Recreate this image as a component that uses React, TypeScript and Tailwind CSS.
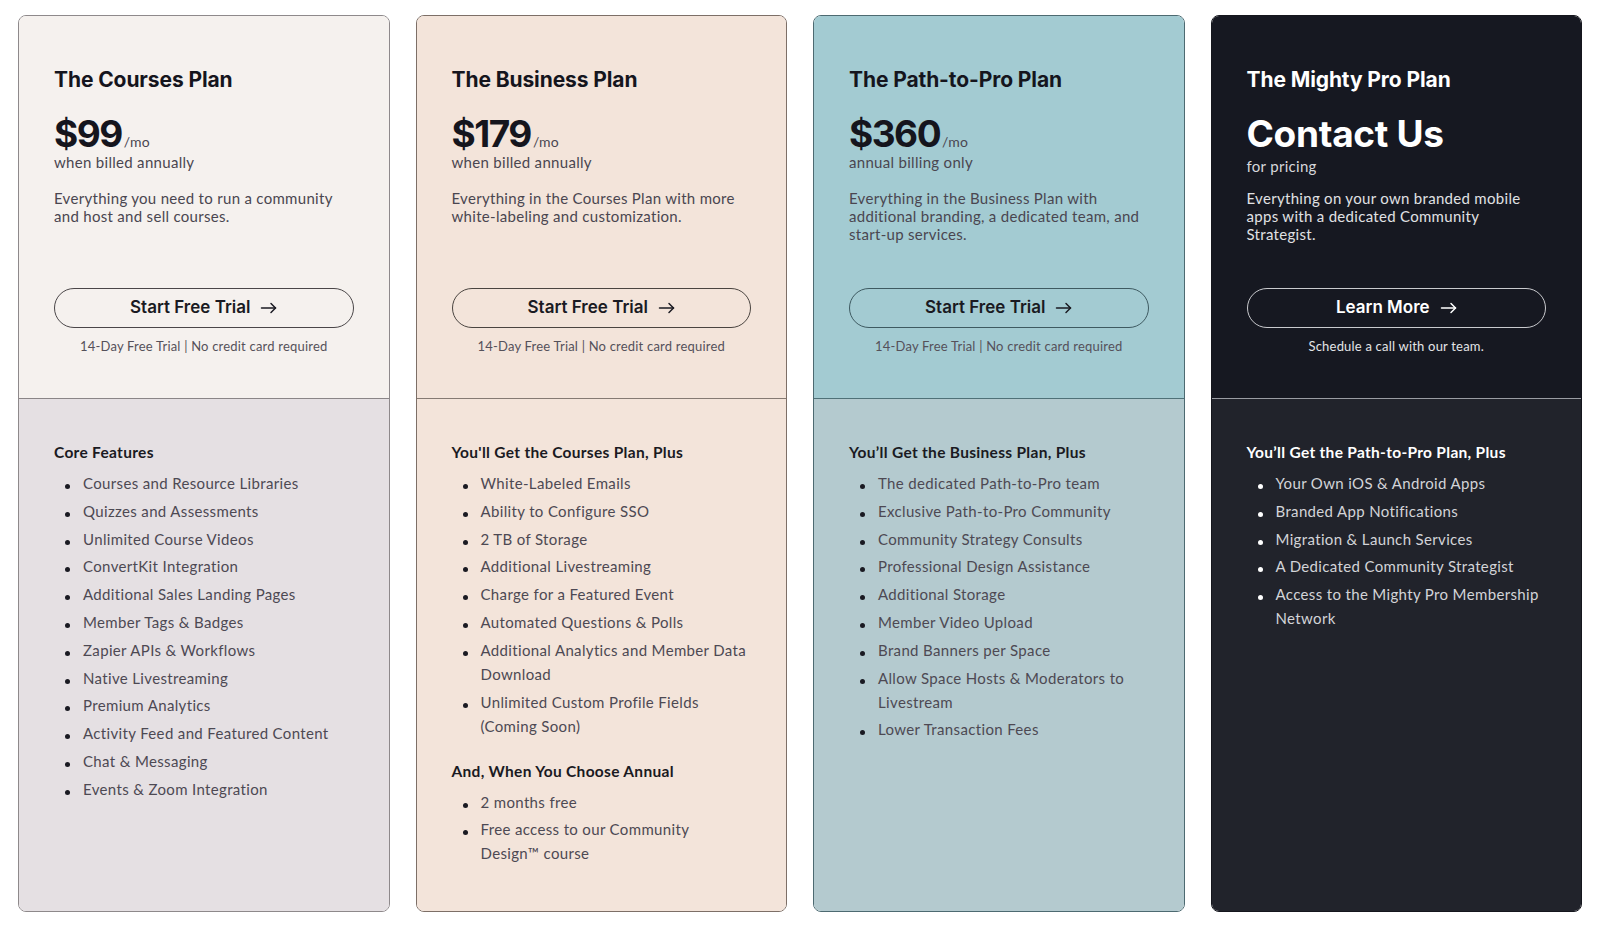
import React from 'react';

type Section = { heading: string; items: string[] };

type Plan = {
  name: string;
  price: string;
  perMonth: boolean;
  billing: string;
  description: string;
  cta: string;
  note: string;
  sections: Section[];
  dark?: boolean;
  cardClass: string;
  topClass: string;
  bottomClass: string;
  buttonClass: string;
};

const plans: Plan[] = [
  {
    name: 'The Courses Plan',
    price: '$99',
    perMonth: true,
    billing: 'when billed annually',
    description: 'Everything you need to run a community and host and sell courses.',
    cta: 'Start Free Trial',
    note: '14-Day Free Trial | No credit card required',
    sections: [
      {
        heading: 'Core Features',
        items: [
          'Courses and Resource Libraries',
          'Quizzes and Assessments',
          'Unlimited Course Videos',
          'ConvertKit Integration',
          'Additional Sales Landing Pages',
          'Member Tags & Badges',
          'Zapier APIs & Workflows',
          'Native Livestreaming',
          'Premium Analytics',
          'Activity Feed and Featured Content',
          'Chat & Messaging',
          'Events & Zoom Integration',
        ],
      },
    ],
    cardClass: 'border-[#8e898b]',
    topClass: 'bg-[#f5f1ee]',
    bottomClass: 'bg-[#e5e0e3] border-[#8a8587]',
    buttonClass: 'border-[#4a4648] text-[#1a1a22]',
  },
  {
    name: 'The Business Plan',
    price: '$179',
    perMonth: true,
    billing: 'when billed annually',
    description: 'Everything in the Courses Plan with more white-labeling and customization.',
    cta: 'Start Free Trial',
    note: '14-Day Free Trial | No credit card required',
    sections: [
      {
        heading: "You'll Get the Courses Plan, Plus",
        items: [
          'White-Labeled Emails',
          'Ability to Configure SSO',
          '2 TB of Storage',
          'Additional Livestreaming',
          'Charge for a Featured Event',
          'Automated Questions & Polls',
          'Additional Analytics and Member Data Download',
          'Unlimited Custom Profile Fields (Coming Soon)',
        ],
      },
      {
        heading: 'And, When You Choose Annual',
        items: ['2 months free', 'Free access to our Community Design™ course'],
      },
    ],
    cardClass: 'border-[#7d6f67]',
    topClass: 'bg-[#f3e4da]',
    bottomClass: 'bg-[#f3e4da] border-[#857a73]',
    buttonClass: 'border-[#4a4440] text-[#1a1a22]',
  },
  {
    name: 'The Path-to-Pro Plan',
    price: '$360',
    perMonth: true,
    billing: 'annual billing only',
    description:
      'Everything in the Business Plan with additional branding, a dedicated team, and start-up services.',
    cta: 'Start Free Trial',
    note: '14-Day Free Trial | No credit card required',
    sections: [
      {
        heading: 'You’ll Get the Business Plan, Plus',
        items: [
          'The dedicated Path-to-Pro team',
          'Exclusive Path-to-Pro Community',
          'Community Strategy Consults',
          'Professional Design Assistance',
          'Additional Storage',
          'Member Video Upload',
          'Brand Banners per Space',
          'Allow Space Hosts & Moderators to Livestream',
          'Lower Transaction Fees',
        ],
      },
    ],
    cardClass: 'border-[#4d6a71]',
    topClass: 'bg-[#a3cbd2]',
    bottomClass: 'bg-[#b4cacf] border-[#4f7178]',
    buttonClass: 'border-[#3e5a61] text-[#1a1a22]',
  },
  {
    name: 'The Mighty Pro Plan',
    price: 'Contact Us',
    perMonth: false,
    billing: 'for pricing',
    description:
      'Everything on your own branded mobile apps with a dedicated Community Strategist.',
    cta: 'Learn More',
    note: 'Schedule a call with our team.',
    sections: [
      {
        heading: 'You’ll Get the Path-to-Pro Plan, Plus',
        items: [
          'Your Own iOS & Android Apps',
          'Branded App Notifications',
          'Migration & Launch Services',
          'A Dedicated Community Strategist',
          'Access to the Mighty Pro Membership Network',
        ],
      },
    ],
    dark: true,
    cardClass: 'border-[#15161d]',
    topClass: 'bg-[#161821]',
    bottomClass: 'bg-[#21232b] border-[#9a9ca3]',
    buttonClass: 'border-[#c9cace] text-white',
  },
];

const heading = { fontFamily: 'Inter, "Liberation Sans", sans-serif' };
const body = { fontFamily: 'Lato, "Open Sans", sans-serif' };

function Arrow() {
  return (
    <svg width="17" height="12" viewBox="0 0 17 12" fill="none" stroke="currentColor" strokeWidth="1.5" strokeLinecap="round" strokeLinejoin="round">
      <path d="M1.5 6h14" />
      <path d="M11 1.5 15.5 6 11 10.5" />
    </svg>
  );
}

function PlanCard({ plan }: { plan: Plan }) {
  const dark = plan.dark;
  return (
    <div className={`flex h-[897px] flex-1 flex-col overflow-hidden rounded-lg border ${plan.cardClass}`}>
      <div className={`flex h-[382px] flex-col px-[35px] pb-[44px] pt-[50px] ${plan.topClass}`}>
        <h2
          style={heading}
          className={`text-[21px] font-bold leading-[28px] tracking-[-0.1px] ${dark ? 'text-white' : 'text-[#15151d]'}`}
        >
          {plan.name}
        </h2>

        <div className="mt-[21px] flex items-baseline">
          <span
            style={heading}
            className={`text-[37px] font-bold leading-[38px] ${dark ? 'tracking-[-0.3px] text-white' : 'tracking-[-1.5px] text-[#15151d]'}`}
          >
            {plan.price}
          </span>
          {plan.perMonth && (
            <span style={body} className="ml-[2px] text-[14px] tracking-[0.2px] text-[#4a4650]">
              /mo
            </span>
          )}
        </div>
        <p
          style={body}
          className={`text-[15px] leading-[18px] tracking-[0.3px] ${dark ? 'mt-[4px] text-[#d6d7db]' : 'text-[#4a4650]'}`}
        >
          {plan.billing}
        </p>

        <p
          style={body}
          className={`text-[15px] leading-[18px] tracking-[0.3px] ${dark ? 'mt-[14px] text-[#e0e1e4]' : 'mt-[18px] text-[#4a4650]'}`}
        >
          {plan.description}
        </p>

        <button
          style={heading}
          className={`mt-auto flex h-[40px] w-full items-center justify-center gap-[10px] rounded-full border text-[17px] font-semibold ${plan.buttonClass}`}
        >
          {plan.cta}
          <Arrow />
        </button>
        <p
          style={body}
          className={`mt-[10px] text-center text-[13px] leading-[16px] tracking-[0.2px] ${dark ? 'text-[#e3e4e7]' : 'text-[#55515a]'}`}
        >
          {plan.note}
        </p>
      </div>

      <div className={`flex-1 border-t px-[35px] pt-[43px] ${plan.bottomClass}`}>
        {plan.sections.map((section, i) => (
          <div key={section.heading} className={i > 0 ? 'mt-[23px]' : ''}>
            <h3
              style={body}
              className={`text-[15.5px] font-bold leading-[20px] tracking-[0.3px] ${dark ? 'text-white' : 'text-[#1a1a22]'}`}
            >
              {section.heading}
            </h3>
            <ul className="mt-[9px] flex flex-col gap-[3.8px]">
              {section.items.map(item => (
                <li key={item} className="flex">
                  <span className="w-[29px] shrink-0 pl-[11px] pt-[13px]">
                    <span className={`block h-[5px] w-[5px] rounded-full ${dark ? 'bg-white' : 'bg-[#1a1a22]'}`} />
                  </span>
                  <span
                    style={body}
                    className={`text-[15px] leading-[24px] tracking-[0.35px] ${dark ? 'text-[#d3d4d8]' : 'text-[#4d4953]'}`}
                  >
                    {item}
                  </span>
                </li>
              ))}
            </ul>
          </div>
        ))}
      </div>
    </div>
  );
}

export default function App() {
  return (
    <div className="min-h-screen bg-white pl-[18px] pr-[18px] pt-[15px]">
      <div className="flex gap-[26px]">
        {plans.map(plan => (
          <PlanCard key={plan.name} plan={plan} />
        ))}
      </div>
    </div>
  );
}
